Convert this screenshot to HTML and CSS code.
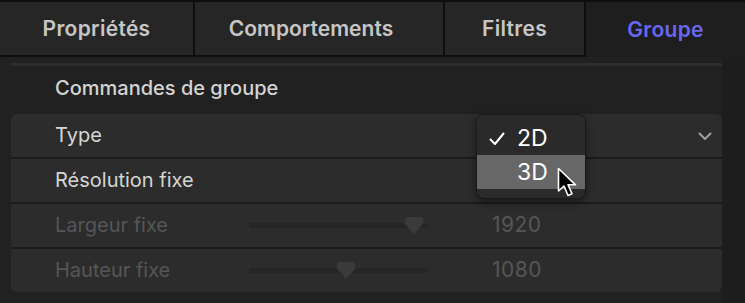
FILE: index.html
```html
<!DOCTYPE html>
<html lang="fr">
<head>
    <meta charset="UTF-8">
    <title>Inspecteur - Groupe</title>
    <link rel="stylesheet" href="styles.css">
</head>
<body>
    <!-- Tabs -->
    <div class="tabs">
        <div class="tab">Propriétés</div>
        <div class="tab tab-wide">Comportements</div>
        <div class="tab tab-narrow">Filtres</div>
        <div class="tab active">Groupe</div>
    </div>

    <div class="content">
        <div class="scroll-line"></div>
        <h3 class="section-title">Commandes de groupe</h3>

        <div class="panel">
            <div class="row">
                <span class="label">Type</span>
                <svg class="chevron" width="14" height="9" viewBox="0 0 14 9">
                    <polyline points="1.5,1.5 7,7 12.5,1.5" fill="none" stroke="#a0a0a0" stroke-width="2" stroke-linecap="round" stroke-linejoin="round"/>
                </svg>
            </div>
            <div class="row">
                <span class="label">Résolution fixe</span>
            </div>
            <div class="row disabled">
                <span class="label">Largeur fixe</span>
                <div class="slider">
                    <div class="track"></div>
                    <svg class="thumb" style="left: 156px" width="18" height="17" viewBox="0 0 18 17">
                        <path d="M3 0 H15 Q18 0 18 3 V7 L9 17 L0 7 V3 Q0 0 3 0 Z" fill="#3a3a3a"/>
                    </svg>
                </div>
                <span class="value">1920</span>
            </div>
            <div class="row disabled">
                <span class="label">Hauteur fixe</span>
                <div class="slider">
                    <div class="track"></div>
                    <svg class="thumb" style="left: 88px" width="18" height="17" viewBox="0 0 18 17">
                        <path d="M3 0 H15 Q18 0 18 3 V7 L9 17 L0 7 V3 Q0 0 3 0 Z" fill="#3a3a3a"/>
                    </svg>
                </div>
                <span class="value">1080</span>
            </div>
        </div>
        <div class="side-strip"></div>
    </div>

    <!-- Popup menu -->
    <div class="menu">
        <div class="menu-item">
            <svg class="check" width="16" height="14" viewBox="0 0 16 14">
                <polyline points="1.5,7.5 6,12 14.5,1.5" fill="none" stroke="#ffffff" stroke-width="2" stroke-linecap="round" stroke-linejoin="round"/>
            </svg>
            <span>2D</span>
        </div>
        <div class="menu-item selected">
            <span>3D</span>
        </div>
    </div>

    <!-- Mouse cursor -->
    <svg class="cursor" width="24" height="32" viewBox="0 0 24 32">
        <path d="M1.5 1.5 V24 L7 19 L11 28.5 L15 26.8 L11 17.8 L18.5 17.8 Z" fill="#000" stroke="#fff" stroke-width="1.6" stroke-linejoin="round"/>
    </svg>
</body>
</html>
```

FILE: styles.css
```css
* {
    margin: 0;
    padding: 0;
    box-sizing: border-box;
}
body {
    font-family: Inter, "Noto Sans", sans-serif;
    background-color: #212121;
    width: 745px;
    height: 303px;
    overflow: hidden;
    position: relative;
}

/* ============= Tabs ============= */
.tabs {
    display: flex;
    height: 57px;
    border-top: 2px solid #0e0e0e;
    background-color: #0e0e0e;
}
.tab {
    width: 193px;
    display: flex;
    align-items: center;
    justify-content: center;
    background-color: #262626;
    border-bottom: 2px solid #0e0e0e;
    margin-right: 2px;
    color: #c6c6c6;
    font-size: 21px;
    font-weight: 600;
    letter-spacing: 0.3px;
    padding-bottom: 1px;
}
.tab-wide {
    width: 248px;
    letter-spacing: 0;
    padding-right: 16px;
}
.tab-narrow {
    width: 139px;
}
.tab.active {
    flex: 1;
    margin-right: 0;
    background-color: #1e1e1e;
    border-bottom: none;
    color: #6767f2;
    padding-bottom: 0;
}

/* ============= Content ============= */
.content {
    position: relative;
    padding: 6px 23px 0 11px;
    height: 246px;
}
.scroll-line {
    height: 3px;
    background-color: #2d2d2d;
}
.section-title {
    font-size: 20px;
    font-weight: 500;
    color: #d4d4d4;
    padding: 10px 0 0 44px;
    height: 48px;
}
.panel {
    display: grid;
    grid-template-rows: repeat(4, 43px);
    gap: 2px;
    background-color: #1b1b1b;
    border-radius: 6px;
    overflow: hidden;
}
.row {
    display: flex;
    align-items: center;
    background-color: #2c2c2c;
    padding-left: 44px;
    position: relative;
}
.label {
    font-size: 20px;
    color: #d6d6d6;
    width: 194px;
    padding-bottom: 1px;
}
.disabled .label,
.disabled .value {
    color: #565656;
}
.chevron {
    position: absolute;
    right: 10px;
    top: 18px;
}
.slider {
    position: relative;
    width: 179px;
    height: 17px;
}
.track {
    position: absolute;
    left: 0;
    right: 0;
    top: 6px;
    height: 5px;
    border-radius: 3px;
    background-color: #262626;
}
.thumb {
    position: absolute;
    top: 0;
}
.value {
    font-size: 21px;
    letter-spacing: 0.5px;
    margin-left: 64px;
    padding-bottom: 2px;
}
.side-strip {
    position: absolute;
    right: 0;
    top: 0;
    width: 23px;
    height: 100%;
    background-color: #1d1d1d;
}

/* ============= Popup menu ============= */
.menu {
    position: absolute;
    left: 476px;
    top: 114px;
    width: 110px;
    padding: 6px 0 9px;
    background-color: #2a2a2a;
    border: 1px solid #1a1a1a;
    border-radius: 8px;
    box-shadow: 0 3px 8px rgba(0, 0, 0, 0.45);
}
.menu-item {
    height: 34px;
    display: flex;
    align-items: center;
    padding-left: 40px;
    position: relative;
    color: #ffffff;
    font-size: 23px;
    font-weight: 400;
}
.menu-item.selected {
    background-color: #676767;
}
.check {
    position: absolute;
    left: 12px;
    top: 11px;
}
.cursor {
    position: absolute;
    left: 557px;
    top: 167px;
}
```
